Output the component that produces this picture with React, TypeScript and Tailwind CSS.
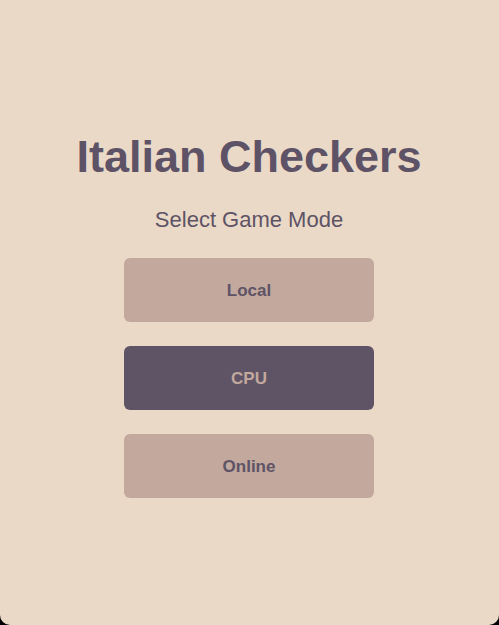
const modes = [
  { label: "Local", active: false },
  { label: "CPU", active: true },
  { label: "Online", active: false },
];

export default function App() {
  return (
    <div className="h-screen w-full bg-black">
      <main
        className="flex h-full w-full flex-col items-center rounded-b-[10px] bg-[#ebd9c7] pt-[131px] pr-px text-[#5e5366]"
        style={{ fontFamily: '"Liberation Sans", Arial, sans-serif' }}
      >
        <h1 className="text-[45px] font-bold leading-[52px]">Italian Checkers</h1>
        <p className="mt-[24px] text-[22px] leading-[25px]">Select Game Mode</p>

        <div className="mt-[26px] flex flex-col gap-6">
          {modes.map((mode) => (
            <button
              key={mode.label}
              className={
                mode.active
                  ? "h-16 w-[250px] rounded-md bg-[#5f5466] pt-[2px] text-[17px] font-bold text-[#c2a89d]"
                  : "h-16 w-[250px] rounded-md bg-[#c2a89d] pt-[2px] text-[17px] font-bold text-[#5e5366]"
              }
            >
              {mode.label}
            </button>
          ))}
        </div>
      </main>
    </div>
  );
}
